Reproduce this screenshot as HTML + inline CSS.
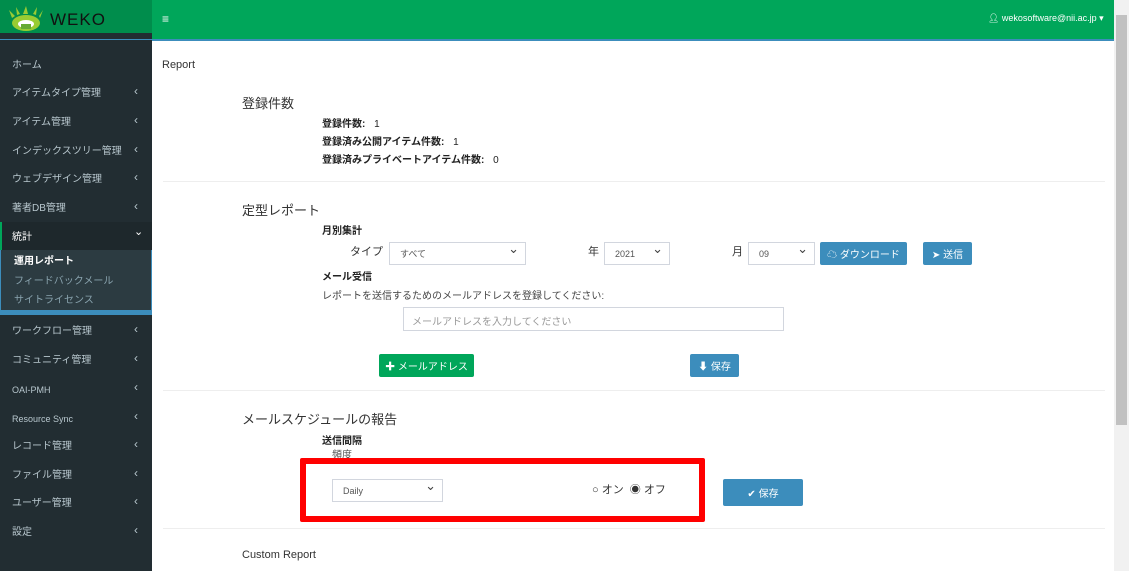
<!DOCTYPE html>
<html><head><meta charset="utf-8"><style>
*{box-sizing:border-box;margin:0;padding:0}
body{width:1129px;height:571px;overflow:hidden;position:relative;background:#fff;font-family:"Liberation Sans","Noto Sans CJK JP",sans-serif;color:#333;font-size:11px}
.a{position:absolute;white-space:nowrap}
.side{position:absolute;left:0;top:40px;width:152px;height:531px;background:#222d32}
.si{position:absolute;left:12px;color:#b8c7ce;font-size:10px;line-height:12px;margin-top:2px}
.ch{position:absolute;left:134px;color:#b8c7ce;font-size:12px;line-height:12px;margin-top:-1px}
.sel{position:absolute;border:1px solid #d2d6de;background:#fff;font-size:9px;color:#555;padding-left:10px;display:flex;align-items:center}
.sel:after{content:"⌄";position:absolute;right:6px;top:-2px;font-size:13px;color:#444}
.btn{position:absolute;color:#fff;font-size:10px;display:flex;align-items:center;justify-content:center;border-radius:2px}
.b{font-weight:bold;font-size:10px;color:#222}
hr{position:absolute;border:0;border-top:1px solid #eee;left:163px;width:942px}
</style></head><body>
<div class="a" style="left:0;top:0;width:1129px;height:40px;background:#00a65a"></div>
<div class="a" style="left:0;top:0;width:152px;height:33px;background:#008d4c"></div>
<div class="a" style="left:0;top:33px;width:152px;height:7px;background:#222d32"></div>
<div class="a" style="left:0;top:39px;width:1114px;height:2px;background:#3c8dbc"></div>
<svg class="a" style="left:9px;top:6px" width="34" height="26"><g fill="#9c3"><path d="M3 12 L0 4 L6 10Z M8 9 L7 1 L11 8Z M14 8 L17 0 L19 8Z M24 8 L28 1 L27 9Z M30 10 L34 4 L31 12Z"/></g><ellipse cx="17" cy="17" rx="14" ry="8" fill="#9c3"/><ellipse cx="17" cy="18" rx="8" ry="4" fill="#fff"/><rect x="12" y="18" width="10" height="5" fill="#6a3"/></svg>
<div class="a" style="left:50px;top:10px;font-size:17px;color:#111;letter-spacing:1px">WEKO</div>
<div class="a" style="left:162px;top:12px;color:#fff;font-size:12px">≡</div>
<div class="a" style="left:988px;top:13px;color:#fff;font-size:9px">&#x1F464;&#xFE0E; wekosoftware@nii.ac.jp ▾</div>
<div class="a" style="left:1114px;top:0;width:15px;height:571px;background:#f1f1f1"></div>
<div class="a" style="left:1116px;top:15px;width:11px;height:410px;background:#c1c1c1"></div>
<div class="side"></div>
<div class="a" style="left:0;top:222px;width:152px;height:28px;background:#1e282c;border-left:2px solid #00a65a"></div>
<div class="a" style="left:0;top:250px;width:152px;height:60px;background:#2c3b41;border:1px solid #3c8dbc;border-top:0;border-bottom:0"></div>
<div class="a" style="left:0;top:310px;width:152px;height:5px;background:#3c8dbc"></div>
<div class="si" style="top:58px">ホーム</div>
<div class="si" style="top:86px">アイテムタイプ管理</div><div class="ch" style="top:86px">‹</div>
<div class="si" style="top:115px">アイテム管理</div><div class="ch" style="top:115px">‹</div>
<div class="si" style="top:144px">インデックスツリー管理</div><div class="ch" style="top:144px">‹</div>
<div class="si" style="top:172px">ウェブデザイン管理</div><div class="ch" style="top:172px">‹</div>
<div class="si" style="top:201px">著者DB管理</div><div class="ch" style="top:201px">‹</div>
<div class="si" style="top:230px;color:#fff">統計</div><div class="ch" style="top:227px;color:#fff;font-size:11px">⌄</div>
<div class="si" style="top:254px;left:14px;color:#fff;font-weight:bold">運用レポート</div>
<div class="si" style="top:274px;left:14px;color:#8aa4af">フィードバックメール</div>
<div class="si" style="top:293px;left:14px;color:#8aa4af">サイトライセンス</div>
<div class="si" style="top:324px">ワークフロー管理</div><div class="ch" style="top:324px">‹</div>
<div class="si" style="top:353px">コミュニティ管理</div><div class="ch" style="top:353px">‹</div>
<div class="si" style="top:382px;font-size:9px">OAI-PMH</div><div class="ch" style="top:382px">‹</div>
<div class="si" style="top:411px;font-size:9px">Resource Sync</div><div class="ch" style="top:411px">‹</div>
<div class="si" style="top:439px">レコード管理</div><div class="ch" style="top:439px">‹</div>
<div class="si" style="top:468px">ファイル管理</div><div class="ch" style="top:468px">‹</div>
<div class="si" style="top:496px">ユーザー管理</div><div class="ch" style="top:496px">‹</div>
<div class="si" style="top:525px">設定</div><div class="ch" style="top:525px">‹</div>

<div class="a" style="left:162px;top:59px;font-size:11px">Report</div>
<div class="a" style="left:242px;top:93px;font-size:13px">登録件数</div>
<div class="a b" style="left:322px;top:115px">登録件数: <span style="font-weight:normal;margin-left:6px">1</span></div>
<div class="a b" style="left:322px;top:133px">登録済み公開アイテム件数: <span style="font-weight:normal;margin-left:6px">1</span></div>
<div class="a b" style="left:322px;top:151px">登録済みプライベートアイテム件数: <span style="font-weight:normal;margin-left:6px">0</span></div>
<hr style="top:181px">
<div class="a" style="left:242px;top:200px;font-size:13px">定型レポート</div>
<div class="a b" style="left:322px;top:222px">月別集計</div>
<div class="a" style="left:350px;top:243px;font-size:11px">タイプ</div>
<div class="sel" style="left:389px;top:242px;width:137px;height:23px">すべて</div>
<div class="a" style="left:588px;top:243px;font-size:11px">年</div>
<div class="sel" style="left:604px;top:242px;width:66px;height:23px">2021</div>
<div class="a" style="left:732px;top:243px;font-size:11px">月</div>
<div class="sel" style="left:748px;top:242px;width:67px;height:23px">09</div>
<div class="btn" style="left:820px;top:242px;width:87px;height:23px;background:#3c8dbc">☁ ダウンロード</div>
<div class="btn" style="left:923px;top:242px;width:49px;height:23px;background:#3c8dbc">➤ 送信</div>
<div class="a b" style="left:322px;top:268px">メール受信</div>
<div class="a" style="left:322px;top:287px;font-size:10px;color:#444">レポートを送信するためのメールアドレスを登録してください:</div>
<div class="a" style="left:403px;top:307px;width:381px;height:24px;border:1px solid #d2d6de;font-size:10px;color:#999;padding:5px 8px">メールアドレスを入力してください</div>
<div class="btn" style="left:379px;top:354px;width:95px;height:23px;background:#00a65a">✚ メールアドレス</div>
<div class="btn" style="left:690px;top:354px;width:49px;height:23px;background:#3c8dbc">⬇ 保存</div>
<hr style="top:390px">
<div class="a" style="left:242px;top:409px;font-size:13px">メールスケジュールの報告</div>
<div class="a b" style="left:322px;top:432px">送信間隔</div>
<div class="a" style="left:332px;top:446px;font-size:10px;color:#555">頻度</div>
<div class="a" style="left:300px;top:458px;width:405px;height:64px;border:6px solid #f00;border-radius:2px"></div>
<div class="sel" style="left:332px;top:479px;width:111px;height:23px">Daily</div>
<div class="a" style="left:592px;top:481px;font-size:11px">○ オン &nbsp;◉ オフ</div>
<div class="btn" style="left:723px;top:479px;width:80px;height:27px;background:#3c8dbc">✔ 保存</div>
<hr style="top:528px">
<div class="a" style="left:242px;top:549px;font-size:11px">Custom Report</div>
</body></html>
